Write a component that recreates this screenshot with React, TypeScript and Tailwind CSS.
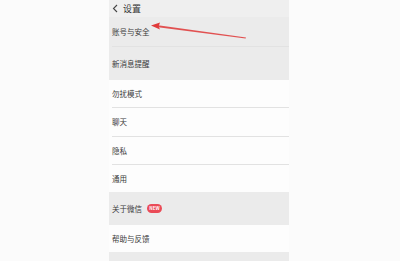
import React from "react";

const font = { fontFamily: '"Noto Sans CJK SC", "Noto Sans", sans-serif' };

type Row = { label: string; h: string; gray?: boolean; line?: boolean; badge?: boolean };

const rows: Row[] = [
  { label: "账号与安全", h: "h-[30px]", gray: true, line: true },
  { label: "新消息提醒", h: "h-[33px]", gray: true },
  { label: "勿扰模式", h: "h-[28px]", line: true },
  { label: "聊天", h: "h-[29px]", line: true },
  { label: "隐私", h: "h-[28px]", line: true },
  { label: "通用", h: "h-[27px]" },
  { label: "关于微信", h: "h-[33px]", gray: true, badge: true },
  { label: "帮助与反馈", h: "h-[27px]" },
];

export default function App() {
  return (
    <div className="relative w-[400px] h-[261px] overflow-hidden bg-[#fbfbfb]" style={font}>
      <div className="ml-[109px] w-[180px] flex flex-col">
        {/* Header */}
        <div className="h-[17px] bg-[#efefef] flex items-center pl-[3px] gap-[4px] text-[#333]">
          <svg width="7" height="9" viewBox="0 0 7 9" fill="none">
            <path d="M5 1 L1.5 4.5 L5 8" stroke="#444" strokeWidth="1.1" />
          </svg>
          <span className="text-[9px] leading-none">设置</span>
        </div>

        {rows.map((r) => (
          <div
            key={r.label}
            className={`${r.h} ${r.gray ? "bg-[#ebebeb]" : "bg-[#fdfdfd]"} flex flex-col`}
          >
            <div className="flex-1 flex items-center pl-[3px] gap-[5px]">
              <span className="text-[7.5px] leading-none text-[#3a3a3a]">{r.label}</span>
              {r.badge && (
                <span className="h-[9px] w-[15px] rounded-full bg-[#ea4b57] text-white text-[4.5px] leading-[9px] font-bold text-center">
                  NEW
                </span>
              )}
            </div>
            {r.line && <div className="ml-[3px] h-px bg-[#e2e2e2]" />}
          </div>
        ))}
        <div className="h-[9px] bg-[#ebebeb]" />
      </div>

      {/* annotation arrow */}
      <svg className="absolute left-0 top-0" width="400" height="261" viewBox="0 0 400 261">
        <polygon points="158,25.2 246,37.6 245.6,38.4 158,27.2" fill="#e04040" opacity="0.9" />
        <polygon points="151,25.6 160,22.6 158.6,26.4 160,29.6" fill="#e03a3a" />
      </svg>
    </div>
  );
}
